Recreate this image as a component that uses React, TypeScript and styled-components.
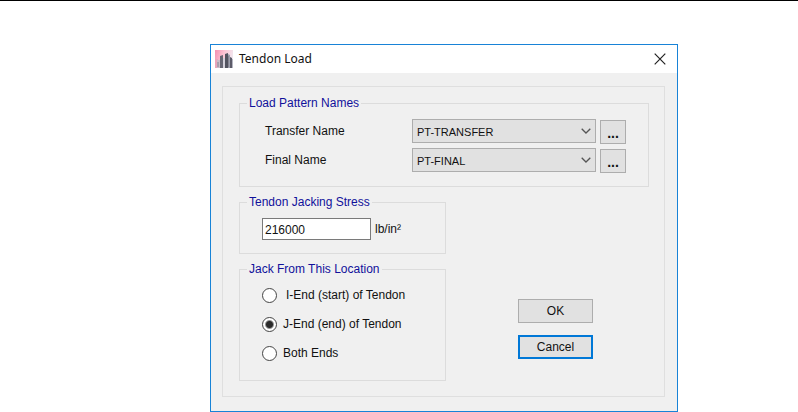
import React, { useState } from "react";
import styled, { createGlobalStyle } from "styled-components";

const GlobalStyle = createGlobalStyle`
  *, *::before, *::after { box-sizing: border-box; }
  body { margin: 0; background: #fff; }
  button, input, select { font: inherit; color: inherit; margin: 0; }
`;

const Page = styled.main`
  border-top: 1px solid #000;
  padding: 43px 120px 0 210px;
  font: 12px/15px "Liberation Sans", Arial, sans-serif;
  color: #111;
`;

const Dialog = styled.section`
  min-width: 440px;
  border: 1px solid #1883d7;
  background: #f0f0f0;
`;

const TitleBar = styled.header`
  display: flex;
  align-items: center;
  gap: 6px;
  height: 28px;
  padding: 0 11px 0 4px;
  background: #fff;
`;

const Title = styled.h1`
  flex: 1;
  margin: 0;
  font: 400 12px/18px "Noto Sans", "Open Sans", sans-serif;
  color: #111;
`;

const CloseButton = styled.button`
  display: flex;
  padding: 0;
  border: 0;
  background: none;
`;

const Body = styled.form`
  padding: 13px 12px 14px 11px;
`;

const Panel = styled.div`
  display: flex;
  flex-direction: column;
  gap: 8px;
  padding: 9px 15px 15px 16px;
  border: 1px solid #dfdfdf;
`;

const Group = styled.fieldset`
  min-width: 0;
  margin: 0;
  padding: 8px 22px 13px;
  border: 1px solid #dcdcdc;
`;

const Legend = styled.legend`
  margin-left: -15px;
  padding: 0 2px;
  line-height: 15px;
  color: #11119b;
`;

const PatternRow = styled.div`
  display: grid;
  grid-template-columns: 143px 1fr 26px;
  column-gap: 4px;
  height: 25px;
  padding-left: 3px;

  & + & { margin-top: 4px; }
`;

const RowLabel = styled.label`
  line-height: 24px;
`;

const SelectBox = styled.div`
  display: grid;
  grid-template-columns: 1fr 20px;
  align-items: center;
  height: 24px;

  svg {
    grid-area: 1 / 2;
    justify-self: center;
    pointer-events: none;
  }
`;

const Select = styled.select`
  grid-area: 1 / 1 / 2 / 3;
  width: 100%;
  height: 24px;
  padding: 2px 20px 0 4px;
  appearance: none;
  border: 1px solid #adadad;
  border-radius: 0;
  background: #e1e1e1;
  font-size: 11px;
`;

const Button = styled.button<{ $focused?: boolean }>`
  width: 75px;
  height: 24px;
  padding: 0;
  border: ${(p) => (p.$focused ? "2px solid #0078d7" : "1px solid #adadad")};
  background: #e1e1e1;
`;

const BrowseButton = styled(Button)`
  align-self: end;
  width: 26px;
  padding-top: 3px;
  font-size: 14px;
  font-weight: 700;
`;

const Lower = styled.div`
  display: flex;
  gap: 72px;
`;

const LowerGroups = styled.div`
  display: flex;
  flex-direction: column;
  flex: 0 0 207px;
  gap: 8px;
`;

const StressField = styled.label`
  display: flex;
  align-items: center;
  gap: 4px;
`;

const StressInput = styled.input`
  width: 109px;
  height: 22px;
  padding: 1px 2px 0;
  border: 1px solid #7a7a7a;
  background: #fff;
`;

const RadioGroup = styled(Group)`
  padding-top: 4px;
  padding-bottom: 12px;
`;

const RadioRow = styled.label<{ $indent?: boolean }>`
  display: flex;
  align-items: center;
  gap: ${(p) => (p.$indent ? 9 : 6)}px;
  height: 29px;
`;

const Radio = styled.input`
  width: 15px;
  height: 15px;
  appearance: none;
  border: 1px solid #444;
  border-radius: 50%;
  background: #fff;

  &:checked {
    background: radial-gradient(circle, #2b2b2b 0 3px, #fff 5px);
  }
`;

const Actions = styled.div`
  display: flex;
  flex-direction: column;
  justify-content: flex-end;
  gap: 12px;
  padding-bottom: 22px;
`;

const AppIcon = () => (
  <svg width="18" height="18" viewBox="0 0 18 18" aria-hidden="true">
    <defs>
      <linearGradient id="sky" x1="0" y1="0" x2="1" y2="0.3">
        <stop offset="0" stopColor="#f58fb0" />
        <stop offset="0.5" stopColor="#fbc3d3" />
        <stop offset="1" stopColor="#f1e6ee" />
      </linearGradient>
    </defs>
    <rect width="18" height="18" fill="url(#sky)" />
    <path d="M0 9h3v9H0z" fill="#e9a6ba" />
    <path d="M2 10h4v8H2z" fill="#c9bcc8" />
    <path d="M5 6l3-1v13H5z" fill="#666673" />
    <path d="M8 8h2v10H8z" fill="#d3d0da" />
    <path d="M10 4l3-1v15h-3z" fill="#51535f" />
    <path d="M13 4l2 1v13h-2z" fill="#9da0ad" />
    <path d="M15 7l2 1v10h-2z" fill="#5c5b69" />
    <path d="M17 9h1v9h-1z" fill="#b5b6c1" />
    <path d="M3 12v5M13.5 6v11" stroke="#868492" />
  </svg>
);

const CloseIcon = () => (
  <svg width="12" height="12" viewBox="0 0 12 12" aria-hidden="true">
    <path d="M.7.7l10.6 10.6M11.3.7L.7 11.3" stroke="#222" strokeWidth="1.2" />
  </svg>
);

const Chevron = () => (
  <svg width="10" height="6" viewBox="0 0 10 6" aria-hidden="true">
    <path d="M.7.7L5 5 9.3.7" fill="none" stroke="#555" strokeWidth="1.3" />
  </svg>
);

const patterns = [
  { id: "transfer", label: "Transfer Name", value: "PT-TRANSFER" },
  { id: "final", label: "Final Name", value: "PT-FINAL" },
];

const locations = [
  { id: "i", label: "I-End (start) of Tendon", indent: true },
  { id: "j", label: "J-End (end) of Tendon", indent: false },
  { id: "both", label: "Both Ends", indent: false },
];

export default function App() {
  const [location, setLocation] = useState("j");

  return (
    <Page>
      <GlobalStyle />
      <Dialog role="dialog" aria-labelledby="dialog-title">
        <TitleBar>
          <AppIcon />
          <Title id="dialog-title">Tendon Load</Title>
          <CloseButton type="button" aria-label="Close">
            <CloseIcon />
          </CloseButton>
        </TitleBar>
        <Body onSubmit={(e) => e.preventDefault()}>
          <Panel>
            <Group>
              <Legend>Load Pattern Names</Legend>
              {patterns.map((p) => (
                <PatternRow key={p.id}>
                  <RowLabel htmlFor={p.id}>{p.label}</RowLabel>
                  <SelectBox>
                    <Select id={p.id} defaultValue={p.value}>
                      <option>{p.value}</option>
                    </Select>
                    <Chevron />
                  </SelectBox>
                  <BrowseButton type="button">...</BrowseButton>
                </PatternRow>
              ))}
            </Group>
            <Lower>
              <LowerGroups>
                <Group>
                  <Legend>Tendon Jacking Stress</Legend>
                  <StressField>
                    <StressInput type="text" defaultValue="216000" aria-label="Tendon Jacking Stress" />
                    lb/in²
                  </StressField>
                </Group>
                <RadioGroup>
                  <Legend>Jack From This Location</Legend>
                  {locations.map((l) => (
                    <RadioRow key={l.id} $indent={l.indent}>
                      <Radio
                        type="radio"
                        name="location"
                        checked={location === l.id}
                        onChange={() => setLocation(l.id)}
                      />
                      {l.label}
                    </RadioRow>
                  ))}
                </RadioGroup>
              </LowerGroups>
              <Actions>
                <Button type="submit">OK</Button>
                <Button type="button" $focused>Cancel</Button>
              </Actions>
            </Lower>
          </Panel>
        </Body>
      </Dialog>
    </Page>
  );
}
